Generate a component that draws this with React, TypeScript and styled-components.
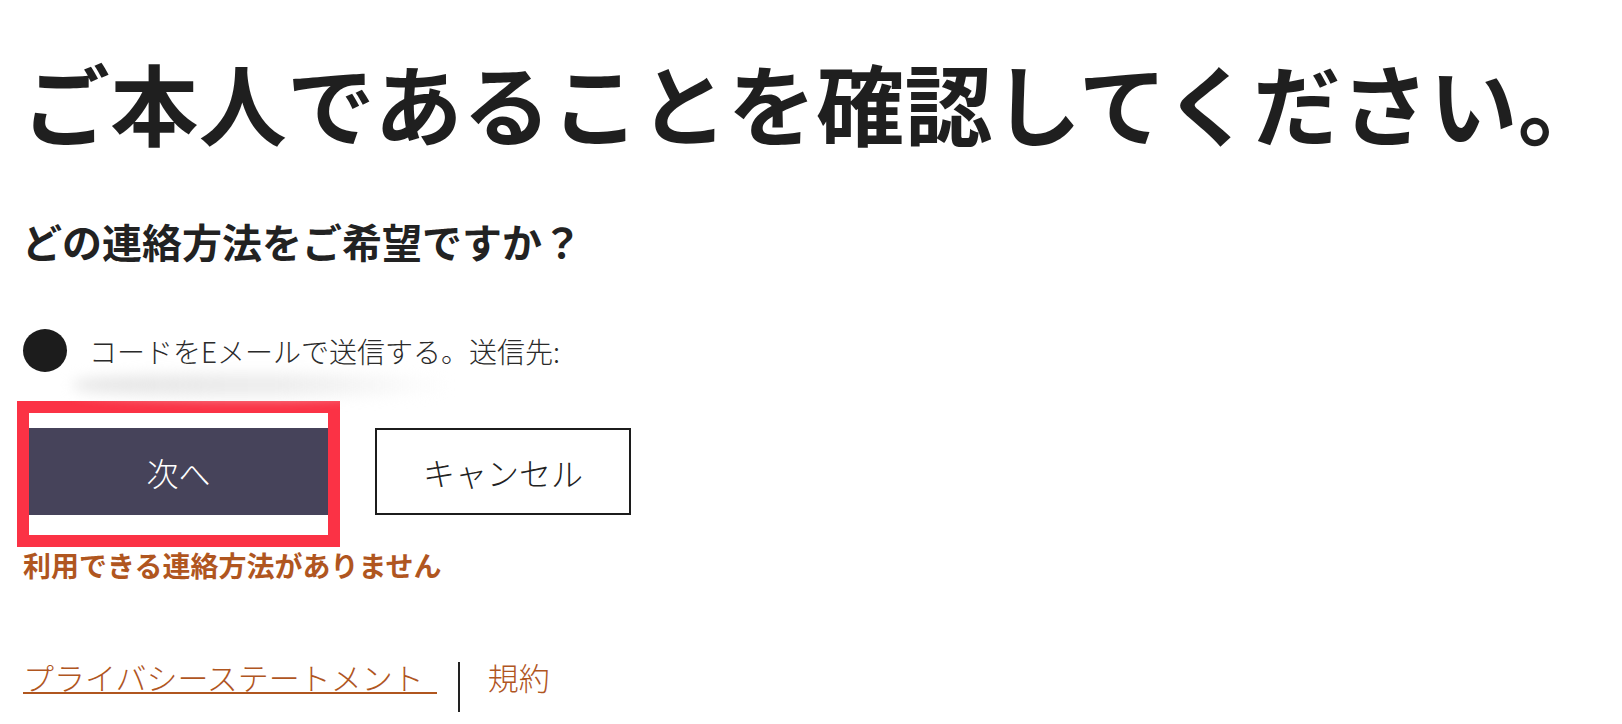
import React, { useState } from 'react';
import styled, { createGlobalStyle } from 'styled-components';

const GlobalStyle = createGlobalStyle`
  html, body {
    margin: 0;
    padding: 0;
    background: #ffffff;
  }
  body {
    font-family: 'Noto Sans CJK JP', 'Noto Sans', sans-serif;
    color: #222222;
  }
`;

const Page = styled.div`
  padding: 56px 0 0 22px;
`;

const Title = styled.h1`
  margin: 0;
  font-size: 88px;
  line-height: 90px;
  font-weight: 700;
  color: #1f1f1f;
  letter-spacing: 0.35px;
  white-space: nowrap;
`;

const Question = styled.h2`
  margin: 75px 0 0;
  font-size: 40px;
  line-height: 40px;
  font-weight: 700;
  color: #222222;
`;

const OptionRow = styled.label`
  display: flex;
  align-items: center;
  gap: 22px;
  margin: 68px 0 0 1px;
  cursor: pointer;
`;

const RadioDot = styled.span<{ $checked: boolean }>`
  width: 44px;
  height: 43px;
  border-radius: 50%;
  background: ${(p) => (p.$checked ? '#1c1c1c' : '#ffffff')};
  border: ${(p) => (p.$checked ? 'none' : '2px solid #1c1c1c')};
  box-sizing: border-box;
  flex-shrink: 0;
`;

const OptionText = styled.span`
  font-size: 28px;
  line-height: 28px;
  font-weight: 300;
  color: #2a2a2a;
`;

const Redacted = styled.div`
  width: 380px;
  height: 22px;
  margin: 2px 0 0 52px;
  border-radius: 40%;
  background: linear-gradient(90deg, #e4e4e4 0%, #ededed 55%, rgba(245, 245, 245, 0) 100%);
  filter: blur(7px);
`;

const Actions = styled.div`
  display: flex;
  align-items: flex-start;
  gap: 35px;
  margin: 5px 0 0 -5px;
`;

const Highlight = styled.div`
  border: 12px solid #fb3245;
  padding: 15px 0 20px;
  background: #ffffff;
`;

const Button = styled.button<{ $primary?: boolean }>`
  display: flex;
  align-items: center;
  justify-content: center;
  width: ${(p) => (p.$primary ? '299px' : '256px')};
  height: 87px;
  margin: 0;
  padding: 0;
  font-family: inherit;
  font-size: 32px;
  font-weight: 300;
  color: ${(p) => (p.$primary ? '#ffffff' : '#222222')};
  background: ${(p) => (p.$primary ? '#46435a' : '#ffffff')};
  border: ${(p) => (p.$primary ? 'none' : '2.5px solid #1c1c1c')};
  box-sizing: border-box;
  cursor: pointer;
`;

const CancelSlot = styled.div`
  margin-top: 27px;
`;

const ErrorText = styled.p`
  margin: 4px 0 0 1px;
  font-size: 28px;
  line-height: 28px;
  font-weight: 700;
  color: #b0561f;
`;

const Footer = styled.div`
  display: flex;
  align-items: flex-start;
  margin: 82px 0 0 1px;
`;

const FooterLink = styled.a<{ $underline?: boolean }>`
  display: inline-block;
  font-size: 31px;
  line-height: 31px;
  font-weight: 300;
  color: #b0561f;
  text-decoration: none;
  padding-right: ${(p) => (p.$underline ? '13px' : '0')};
  border-bottom: ${(p) => (p.$underline ? '2px solid #b0561f' : 'none')};
  cursor: pointer;
`;

const Divider = styled.span`
  width: 2px;
  height: 50px;
  margin: 1px 28px 0 21px;
  background: #222222;
`;

const App: React.FC = () => {
  const [selected, setSelected] = useState(true);

  return (
    <>
      <GlobalStyle />
      <Page>
        <Title>ご本人であることを確認してください。</Title>
        <Question>どの連絡方法をご希望ですか？</Question>

        <OptionRow onClick={() => setSelected(true)}>
          <RadioDot $checked={selected} />
          <OptionText>コードをEメールで送信する。送信先:</OptionText>
        </OptionRow>
        <Redacted />

        <Actions>
          <Highlight>
            <Button $primary type="button">次へ</Button>
          </Highlight>
          <CancelSlot>
            <Button type="button">キャンセル</Button>
          </CancelSlot>
        </Actions>
        <ErrorText>利用できる連絡方法がありません</ErrorText>

        <Footer>
          <FooterLink $underline>プライバシーステートメント</FooterLink>
          <Divider />
          <FooterLink>規約</FooterLink>
        </Footer>
      </Page>
    </>
  );
};

export default App;
